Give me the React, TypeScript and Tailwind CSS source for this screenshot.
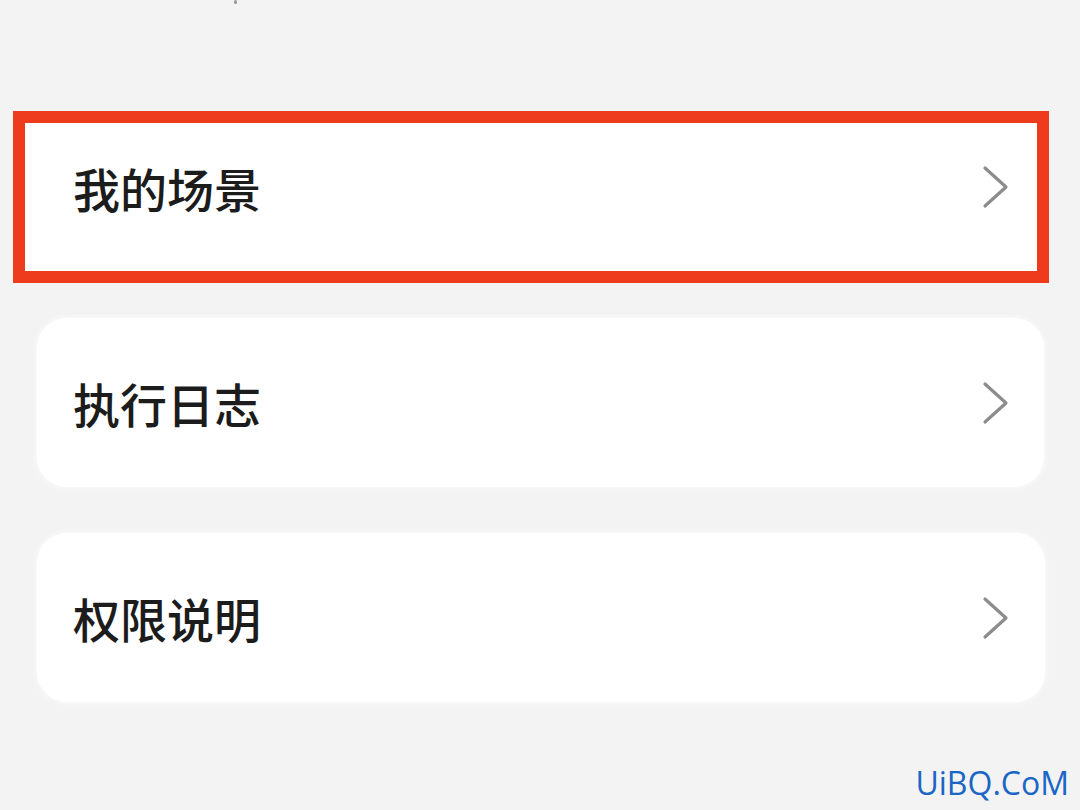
import React from "react";

const items = ["我的场景", "执行日志", "权限说明"];

const Chevron: React.FC = () => (
  <svg width="30" height="46" viewBox="0 0 30 46" fill="none">
    <path
      d="M4 4 L25 23 L4 42"
      stroke="#8c8c8c"
      strokeWidth="3.2"
      strokeLinecap="round"
      strokeLinejoin="round"
    />
  </svg>
);

const Label: React.FC<{ text: string }> = ({ text }) => (
  <span
    className="text-[47px] leading-none font-medium text-[#1c1c1c] tracking-[0px]"
    style={{ fontFamily: '"Noto Sans CJK SC", "Noto Sans", sans-serif' }}
  >
    {text}
  </span>
);

const App: React.FC = () => {
  return (
    <div className="relative w-[1080px] h-[810px] overflow-hidden bg-[#f3f3f3]">
      <div className="absolute left-[234px] top-0 w-[3px] h-[4px] rounded-full bg-[#9a9a9a]" />

      <div className="flex flex-col">
        {/* highlighted row */}
        <div className="mt-[111px] ml-[13px] w-[1036px] h-[172px] border-[12px] border-[#ef3b1d] bg-white">
          <div className="flex h-full items-center justify-between pl-[48px] pr-[26px] pb-[20px]">
            <Label text={items[0]} />
            <Chevron />
          </div>
        </div>

        <div className="mt-[35px] ml-[37px] w-[1007px] h-[169px] rounded-[30px] bg-white shadow-[0_0_6px_rgba(255,255,255,0.9)] flex items-center justify-between pl-[36px] pr-[33px]">
          <Label text={items[1]} />
          <Chevron />
        </div>

        <div className="mt-[46px] ml-[37px] w-[1008px] h-[169px] rounded-[30px] bg-white shadow-[0_0_6px_rgba(255,255,255,0.9)] flex items-center justify-between pl-[36px] pr-[34px]">
          <Label text={items[2]} />
          <Chevron />
        </div>
      </div>

      <div
        className="absolute right-[11px] bottom-[11px] text-[32px] leading-none text-[#1a66c6]"
        style={{ fontFamily: '"Open Sans", "Liberation Sans", sans-serif' }}
      >
        UiBQ.CoM
      </div>
    </div>
  );
};

export default App;
